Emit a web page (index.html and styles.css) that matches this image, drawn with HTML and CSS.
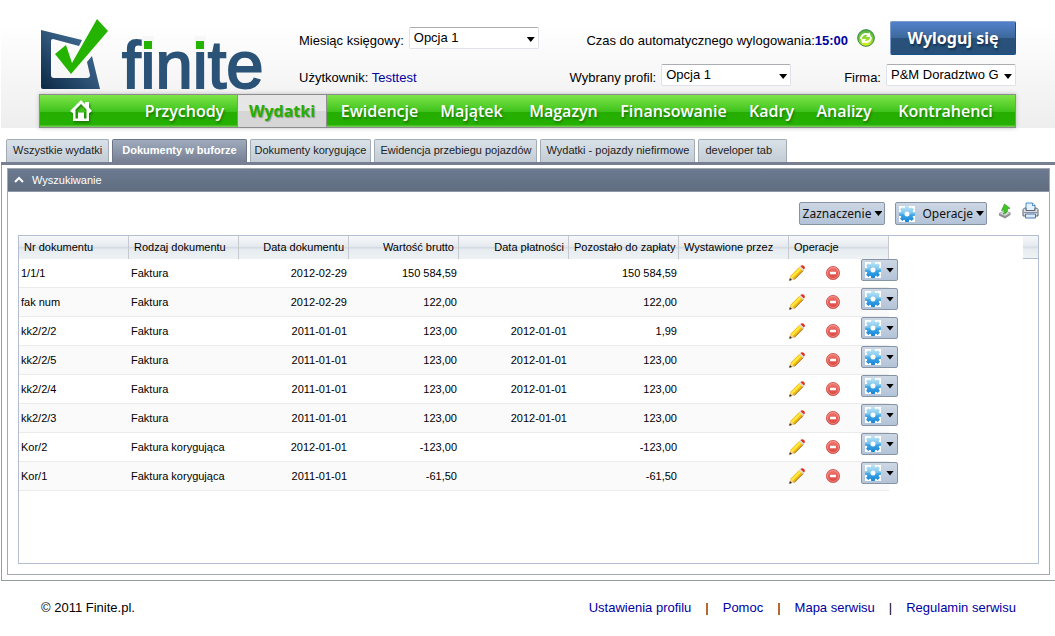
FILE: index.html
```html
<!DOCTYPE html>
<html lang="pl">
<head>
<meta charset="utf-8">
<title>Finite - Wydatki</title>
<link rel="stylesheet" href="styles.css">
</head>
<body>
<svg class="defs" aria-hidden="true">
  <defs>
    <linearGradient id="gearFill" x1="0" y1="0" x2="0" y2="1"><stop offset="0" stop-color="#bfe6f7"/><stop offset=".45" stop-color="#7cc4ec"/><stop offset=".55" stop-color="#3fa6e6"/><stop offset="1" stop-color="#1583d6"/></linearGradient>
    <linearGradient id="minusFill" x1="0" y1="0" x2="0" y2="1"><stop offset="0" stop-color="#f07a72"/><stop offset="1" stop-color="#d8433c"/></linearGradient>
    <linearGradient id="frameFill" x1="0" y1="1" x2="1" y2="0"><stop offset="0" stop-color="#0b2844"/><stop offset=".5" stop-color="#2f5578"/><stop offset="1" stop-color="#44719c"/></linearGradient>
    <radialGradient id="refreshFill" cx=".5" cy=".9" r=".9"><stop offset="0" stop-color="#e6f21a"/><stop offset=".5" stop-color="#8ad82c"/><stop offset="1" stop-color="#4fae48"/></radialGradient>
    <symbol id="gear" viewBox="0 0 16 16">
      <rect width="16" height="16" fill="#fff"/>
      <path fill="url(#gearFill)" fill-rule="evenodd" d="M6.200 0h3.600l.3 1.900 1 .4L12.700 1.200 14.900 3.300 13.700 4.900 14.100 5.900 16 6.200v3.600l-1.900.3-.4 1 1.200 1.600-2.200 2.200L11.100 13.700l-1 .4-.3 1.900H6.200L5.900 14.100l-1-.4-1.600 1.200-2.200-2.200L2.300 11.100l-.4-1L0 9.800V6.200l1.900-.3.400-1L1.100 3.300l2.200-2.100L4.900 2.300l1-.4zM8 5.500a2.500 2.500 0 1 0 0 5 2.500 2.500 0 0 0 0-5z"/>
    </symbol>
    <symbol id="pencil" viewBox="0 0 16 16">
      <path d="M.5 15.500 1.500 10.800 10.500 1.800 14.200 5.500 5.200 14.500z" fill="#f3b912"/>
      <path d="M1.900 11.400 10.900 2.400 12.500 4 3.600 13z" fill="#fdea3c"/>
      <path d="M5.200 14.500 14.200 5.500" stroke="#a8620e" stroke-width="1"/>
      <path d="M.5 15.500 1.600 11 5 14.400z" fill="#f3d3a4"/>
      <path d="M.2 15.800.9 13 3 15.100z" fill="#2b2118"/>
      <path d="M10.200 2.200l1.200-1.200 3.600 3.600-1.200 1.200z" fill="#d9dde2"/>
      <path d="M11.400 1.100C12.600-.2 14 0 15 1s1.300 2.400-.1 3.600z" fill="#e3301c"/>
    </symbol>
    <symbol id="minus" viewBox="0 0 16 16">
      <circle cx="8" cy="8" r="6.600" fill="url(#minusFill)" stroke="#cf514b" stroke-width=".8"/>
      <circle cx="8" cy="8" r="5.500" fill="none" stroke="#f3a09a" stroke-width=".7"/>
      <rect x="5" y="6.800" width="6" height="2.400" rx=".5" fill="#fff"/>
    </symbol>
  </defs>
</svg>

<header class="header">
  <div class="masthead">
    <a class="logo" href="#" aria-label="finite">
      <svg width="222" height="74" viewBox="0 0 222 74">
        <path fill="url(#frameFill)" fill-rule="evenodd" d="M0 11 41 21 38 27 12 20Q10 20 10 22V56Q10 59 13 59H46Q49 59 49 56L46 43 51 37 59 70H2Q0 70 0 68z"/>
        <path fill="#24b400" d="M14 35 25 26 31 44 56 0 67 12 30 55z"/>
        <text class="logo-text" x="81" y="69">finite</text>
        <path fill="#f7f7f7" d="M101 17h12v15h-12zM153 17h12v15h-12z"/>
        <path fill="#24b400" d="M103 22h8v8h-8zM155 22h8v8h-8z"/>
      </svg>
    </a>
    <div class="info">
      <div class="info-row">
        <div class="field">
          <label for="month">Miesiąc księgowy:</label>
          <span class="pick"><select id="month"><option>Opcja 1</option></select></span>
        </div>
        <div class="session">
          <span>Czas do automatycznego wylogowania:<b class="time">15:00</b></span>
          <button class="icon-btn" type="button" aria-label="Odśwież">
            <svg width="18" height="18" viewBox="0 0 18 18"><circle cx="9" cy="9" r="8.300" fill="url(#refreshFill)" stroke="#2f8236"/><path d="M3.200 10C3 5.500 7 2.800 11.300 4.400L12.500 3.200 14 8H9l1.200-1.700C7.500 5.500 5 7 5 10z" fill="#fff"/><path d="M14.800 8C15 12.500 11 15.200 6.700 13.600L5.500 14.800 4 10H9l-1.200 1.700C10.500 12.500 13 11 13 8z" fill="#fff"/></svg>
          </button>
          <button class="logout" type="button">Wyloguj się</button>
        </div>
      </div>
      <div class="info-row">
        <span>Użytkownik: <a class="link" href="#">Testtest</a></span>
        <div class="choices">
          <div class="field">
            <label for="profile">Wybrany profil:</label>
            <span class="pick"><select id="profile"><option>Opcja 1</option></select></span>
          </div>
          <div class="field">
            <label for="company">Firma:</label>
            <span class="pick"><select id="company"><option>P&amp;M Doradztwo G</option></select></span>
          </div>
        </div>
      </div>
    </div>
  </div>
  <nav class="mainnav" aria-label="Menu główne">
    <a class="home" href="#" aria-label="Start">
      <svg width="24" height="24" viewBox="0 0 24 24"><path fill="#fff" fill-rule="evenodd" d="M12 1 16 5V3h4v5.500l3 3.500-2.500 2L20 13.500V22H4v-8.500l-.5.500L1 12zM12 5 6.500 10.500V19.500H9V13.500h6v6h2.500v-9z"/></svg>
    </a>
    <a href="#">Przychody</a>
    <a class="current" href="#" aria-current="page">Wydatki</a>
    <a href="#">Ewidencje</a>
    <a href="#">Majątek</a>
    <a href="#">Magazyn</a>
    <a href="#">Finansowanie</a>
    <a href="#">Kadry</a>
    <a href="#">Analizy</a>
    <a href="#">Kontrahenci</a>
  </nav>
</header>

<main class="main">
  <nav class="tabs" aria-label="Wydatki">
    <a class="wide" href="#">Wszystkie wydatki</a>
    <a class="active" href="#">Dokumenty w buforze</a>
    <a class="snug" href="#">Dokumenty korygujące</a>
    <a href="#">Ewidencja przebiegu pojazdów</a>
    <a href="#">Wydatki - pojazdy niefirmowe</a>
    <a class="roomy" href="#">developer tab</a>
  </nav>
  <div class="outer">
    <section class="panel">
      <button class="panel-head" type="button">
        <svg width="10" height="7" viewBox="0 0 10 7"><path d="M1 6 5 2l4 4" fill="none" stroke="#fff" stroke-width="2"/></svg>
        Wyszukiwanie
      </button>
      <div class="panel-body">
        <div class="toolbar">
          <button class="tool" type="button">Zaznaczenie<i class="caret"></i></button>
          <button class="tool" type="button"><svg class="tool-icon" width="16" height="16"><use href="#gear"/></svg>Operacje<i class="caret"></i></button>
          <div class="exports">
            <button class="icon-btn" type="button" aria-label="Eksportuj">
              <svg width="16" height="16" viewBox="0 0 16 16"><path d="M2 10.500 8 7.500l5.500 2.500v2L8 15.500 2 12.500z" fill="#8e9296"/><path d="M2 10.500 8 7.500l5.500 2.500L8 13.200z" fill="#d6d9dc" stroke="#777" stroke-width=".4"/><path d="M6 11c1.500-1 1.600-2.500 1.300-4L4.500 7.500 7.500 1 13 5.300l-2.500.4c.2 2.800-1 4.800-4.500 5.300z" fill="#3fc526" stroke="#2a8f1a" stroke-width=".6"/></svg>
            </button>
            <button class="icon-btn" type="button" aria-label="Drukuj">
              <svg width="17" height="17" viewBox="0 0 17 17"><path d="M4 8V1h6.500L13 3.500V8" fill="#e5f1fc" stroke="#4a8ac8"/><path d="M10.500 1v2.500H13" fill="#fff" stroke="#4a8ac8"/><path d="M1 7.500 2.500 6H4v2.500h9V6h1.500L16 7.500V14H1z" fill="#d9dde3" stroke="#5b6470"/><path d="M1.500 10.500h14" stroke="#8a93a0"/><path d="M3.500 12h10v4h-10z" fill="#d8eafc" stroke="#4a78b0"/></svg>
            </button>
          </div>
        </div>
        <div class="grid">
          <div class="grid-cap"></div>
          <table class="docs">
            <thead>
              <tr><th>Nr dokumentu</th><th>Rodzaj dokumentu</th><th class="num">Data dokumentu</th><th class="num">Wartość brutto</th><th class="num">Data płatności</th><th class="num">Pozostało do zapłaty</th><th>Wystawione przez</th><th class="ops-col">Operacje</th></tr>
            </thead>
            <tbody>
              <tr><td>1/1/1</td><td>Faktura</td><td class="num">2012-02-29</td><td class="num">150 584,59</td><td class="num"></td><td class="num">150 584,59</td><td></td><td><div class="ops"><button class="icon-btn" type="button" aria-label="Edytuj"><svg width="16" height="16"><use href="#pencil"/></svg></button><button class="icon-btn" type="button" aria-label="Usuń"><svg width="16" height="16"><use href="#minus"/></svg></button><button class="row-menu" type="button" aria-label="Operacje"><svg width="16" height="16"><use href="#gear"/></svg><i class="caret"></i></button></div></td></tr>
              <tr><td>fak num</td><td>Faktura</td><td class="num">2012-02-29</td><td class="num">122,00</td><td class="num"></td><td class="num">122,00</td><td></td><td><div class="ops"><button class="icon-btn" type="button" aria-label="Edytuj"><svg width="16" height="16"><use href="#pencil"/></svg></button><button class="icon-btn" type="button" aria-label="Usuń"><svg width="16" height="16"><use href="#minus"/></svg></button><button class="row-menu" type="button" aria-label="Operacje"><svg width="16" height="16"><use href="#gear"/></svg><i class="caret"></i></button></div></td></tr>
              <tr><td>kk2/2/2</td><td>Faktura</td><td class="num">2011-01-01</td><td class="num">123,00</td><td class="num">2012-01-01</td><td class="num">1,99</td><td></td><td><div class="ops"><button class="icon-btn" type="button" aria-label="Edytuj"><svg width="16" height="16"><use href="#pencil"/></svg></button><button class="icon-btn" type="button" aria-label="Usuń"><svg width="16" height="16"><use href="#minus"/></svg></button><button class="row-menu" type="button" aria-label="Operacje"><svg width="16" height="16"><use href="#gear"/></svg><i class="caret"></i></button></div></td></tr>
              <tr><td>kk2/2/5</td><td>Faktura</td><td class="num">2011-01-01</td><td class="num">123,00</td><td class="num">2012-01-01</td><td class="num">123,00</td><td></td><td><div class="ops"><button class="icon-btn" type="button" aria-label="Edytuj"><svg width="16" height="16"><use href="#pencil"/></svg></button><button class="icon-btn" type="button" aria-label="Usuń"><svg width="16" height="16"><use href="#minus"/></svg></button><button class="row-menu" type="button" aria-label="Operacje"><svg width="16" height="16"><use href="#gear"/></svg><i class="caret"></i></button></div></td></tr>
              <tr><td>kk2/2/4</td><td>Faktura</td><td class="num">2011-01-01</td><td class="num">123,00</td><td class="num">2012-01-01</td><td class="num">123,00</td><td></td><td><div class="ops"><button class="icon-btn" type="button" aria-label="Edytuj"><svg width="16" height="16"><use href="#pencil"/></svg></button><button class="icon-btn" type="button" aria-label="Usuń"><svg width="16" height="16"><use href="#minus"/></svg></button><button class="row-menu" type="button" aria-label="Operacje"><svg width="16" height="16"><use href="#gear"/></svg><i class="caret"></i></button></div></td></tr>
              <tr><td>kk2/2/3</td><td>Faktura</td><td class="num">2011-01-01</td><td class="num">123,00</td><td class="num">2012-01-01</td><td class="num">123,00</td><td></td><td><div class="ops"><button class="icon-btn" type="button" aria-label="Edytuj"><svg width="16" height="16"><use href="#pencil"/></svg></button><button class="icon-btn" type="button" aria-label="Usuń"><svg width="16" height="16"><use href="#minus"/></svg></button><button class="row-menu" type="button" aria-label="Operacje"><svg width="16" height="16"><use href="#gear"/></svg><i class="caret"></i></button></div></td></tr>
              <tr><td>Kor/2</td><td>Faktura korygująca</td><td class="num">2012-01-01</td><td class="num">-123,00</td><td class="num"></td><td class="num">-123,00</td><td></td><td><div class="ops"><button class="icon-btn" type="button" aria-label="Edytuj"><svg width="16" height="16"><use href="#pencil"/></svg></button><button class="icon-btn" type="button" aria-label="Usuń"><svg width="16" height="16"><use href="#minus"/></svg></button><button class="row-menu" type="button" aria-label="Operacje"><svg width="16" height="16"><use href="#gear"/></svg><i class="caret"></i></button></div></td></tr>
              <tr><td>Kor/1</td><td>Faktura korygująca</td><td class="num">2011-01-01</td><td class="num">-61,50</td><td class="num"></td><td class="num">-61,50</td><td></td><td><div class="ops"><button class="icon-btn" type="button" aria-label="Edytuj"><svg width="16" height="16"><use href="#pencil"/></svg></button><button class="icon-btn" type="button" aria-label="Usuń"><svg width="16" height="16"><use href="#minus"/></svg></button><button class="row-menu" type="button" aria-label="Operacje"><svg width="16" height="16"><use href="#gear"/></svg><i class="caret"></i></button></div></td></tr>
            </tbody>
          </table>
        </div>
      </div>
    </section>
  </div>
</main>

<footer class="footer">
  <span>© 2011 Finite.pl.</span>
  <nav class="footer-links" aria-label="Stopka">
    <a class="link" href="#">Ustawienia profilu</a><span>|</span>
    <a class="link" href="#">Pomoc</a><span>|</span>
    <a class="link" href="#">Mapa serwisu</a><span>|</span>
    <a class="link" href="#">Regulamin serwisu</a>
  </nav>
</footer>
</body>
</html>
```

FILE: styles.css
```css
* { box-sizing: border-box; }

body {
  margin: 0;
  background: #fff;
  color: #000;
  font: 13px/16px "Liberation Sans", Arial, sans-serif;
}

svg { display: block; flex: none; }
.defs { position: absolute; width: 0; height: 0; }

button { font: inherit; color: inherit; cursor: pointer; }
.icon-btn { display: block; padding: 0; border: 0; background: none; }
.link { color: #0000a0; text-decoration: none; }

/* Header */
.header {
  margin-left: 1px;
  padding: 19px 39px 0 38px;
  background: linear-gradient(#fff 0, #fff 24px, #eee 128px);
}
.masthead { display: flex; gap: 36px; padding: 0 0 1px 2px; }
.logo svg { overflow: visible; }
.logo-text {
  font-size: 67px;
  fill: #2b5377;
  stroke: #2b5377;
  stroke-width: 2px;
}
.info { flex: 1; display: flex; flex-direction: column; gap: 9px; padding-top: 2px; }
.info-row { display: flex; justify-content: space-between; align-items: center; }
.field { display: flex; align-items: center; gap: 5px; }
.field label { padding-top: 6px; }
.info-row > span, .session > span { padding-top: 5px; }
.choices { display: flex; gap: 53px; }
.session { display: flex; align-items: center; gap: 9px; }
.time { color: #0000a0; }

.pick { position: relative; display: block; width: 130px; }
.pick::after, .caret {
  width: 8px;
  height: 5px;
  background: #000;
  clip-path: polygon(0 0, 100% 0, 50% 100%);
}
.pick::after {
  content: "";
  position: absolute;
  right: 4px;
  top: 10px;
  pointer-events: none;
}
.pick select {
  appearance: none;
  display: block;
  width: 100%;
  height: 22px;
  padding: 0 14px 0 4px;
  border: 1px solid #dfe2ea;
  border-top-color: #abadb3;
  border-radius: 2px;
  background: #fff;
  color: #000;
  font: inherit;
}
.logout {
  width: 126px;
  height: 34px;
  margin-left: 6px;
  padding: 0;
  border: 1px solid #14508c;
  border-top-color: #7d9ccb;
  border-left-color: #7d9ccb;
  border-radius: 2px;
  background: linear-gradient(#5281cb, #3d689b 50%, #2a527a 51%, #27507a);
  color: #fff;
  font: bold 16px/20px "Noto Sans", sans-serif;
  text-shadow: 1px 2px 2px #12304e;
}

.mainnav {
  display: grid;
  grid-template-columns: 92fr 105fr 90fr 105fr 79fr 105fr 115fr 81fr 64fr 139fr;
  height: 34px;
  border: 1px solid #8c8c8c;
  background: linear-gradient(#7ee549, #3fc31d 52%, #25ae00 53%, #25b000 92%, #79d25c);
  box-shadow: 0 0 4px #bbb;
}
.mainnav a {
  display: flex;
  align-items: center;
  justify-content: center;
  color: #fff;
  font: 600 16px/30px "Open Sans", "Noto Sans", sans-serif;
  text-decoration: none;
  text-shadow: 1px 2px 2px #1c7a05;
}
.mainnav .home { justify-content: flex-start; padding-left: 29px; }
.home svg { filter: drop-shadow(1px 2px 1px #1c7a05); }
.mainnav .current {
  border: solid #8f8f8f;
  border-width: 0 1px;
  background: linear-gradient(#e6e6e6 50%, #d6d6d6 51%);
  color: #25ae00;
  font-weight: 700;
  text-shadow: 1px 1px 1px #999;
}

/* Sub tabs */
.main { margin-left: 1px; padding-top: 11px; }
.tabs {
  display: flex;
  gap: 3px;
  padding-left: 5px;
  border-bottom: 3px solid #777f93;
  font-size: 11px;
}
.tabs a {
  height: 23px;
  padding: 0 5px;
  border: 1px solid #a3abb4;
  border-bottom: 0;
  border-radius: 2px 2px 0 0;
  background: linear-gradient(#d9e1e9, #c3ccd4);
  color: #222;
  line-height: 21px;
  text-decoration: none;
}
.tabs .wide { padding: 0 6px; }
.tabs .snug { padding: 0 4px; }
.tabs .active {
  padding: 0 9px;
  border-color: #6d7588;
  background: linear-gradient(#9fabbd, #777f93);
  color: #fff;
  font-weight: 700;
}
.tabs .roomy { padding: 0 14px 0 6px; }

.outer {
  padding: 3px 5px 5px;
  border: solid #939f9f;
  border-width: 0 0 1px 1px;
}
.panel { border: 1px solid #a3a7af; }
.panel-head {
  display: flex;
  align-items: center;
  gap: 8px;
  width: 100%;
  height: 23px;
  padding: 0 6px 1px;
  border: 0;
  border-bottom: 1px solid #8e98a8;
  background: linear-gradient(#6c7a92, #606d7f);
  color: #fff;
  font-size: 11px;
}
.panel-body { padding: 10px; }

.toolbar { display: flex; justify-content: flex-end; align-items: flex-start; gap: 10px; }
.tool, .row-menu {
  display: flex;
  align-items: center;
  padding: 0 3px;
  border: 1px solid #8793a6;
  border-radius: 2px;
  background: linear-gradient(#cdd7e4, #b3c3d8);
}
.tool {
  height: 23px;
  gap: 3px;
  padding: 0 2px 0 3px;
  color: #111;
  font: 12px/20px "Noto Sans", sans-serif;
}
.tool-icon { margin-right: 4px; }
.exports { display: flex; gap: 9px; }

.grid {
  position: relative;
  min-height: 329px;
  margin-top: 10px;
  border: 1px solid #b3bed3;
}
.grid-cap {
  position: absolute;
  top: 0;
  right: 0;
  width: 15px;
  height: 23px;
  border-bottom: 1px solid #b3bed3;
}
.grid-cap, .docs th {
  background: linear-gradient(#f6f8fa, #e6eaef 45%, #d5dbe4 50%, #e6ecf0 60%, #eef2f4);
}
.docs {
  width: 870px;
  table-layout: fixed;
  border-collapse: separate;
  border-spacing: 0;
  font-size: 11px;
}
.docs th {
  height: 23px;
  padding: 0 4px 2px 5px;
  border-right: 1px solid #c6cad0;
  font-weight: 400;
  text-align: left;
  white-space: nowrap;
}
.docs .ops-col { width: 100px; }
.docs td {
  height: 29px;
  padding: 0 2px;
  border-bottom: 1px solid #ebebeb;
}
.docs td:last-child { padding: 0; }
.docs tr:nth-child(even) td { background: #fafafa; }
.docs .num { text-align: right; }
.ops { display: flex; align-items: center; gap: 20px; height: 28px; }
.ops .row-menu {
  flex: none;
  align-self: flex-start;
  gap: 5px;
  width: 37px;
  height: 22px;
}

/* Footer */
.footer {
  display: flex;
  justify-content: space-between;
  padding: 19px 39px 20px 41px;
}
.footer-links { display: flex; gap: 14px; }
```
